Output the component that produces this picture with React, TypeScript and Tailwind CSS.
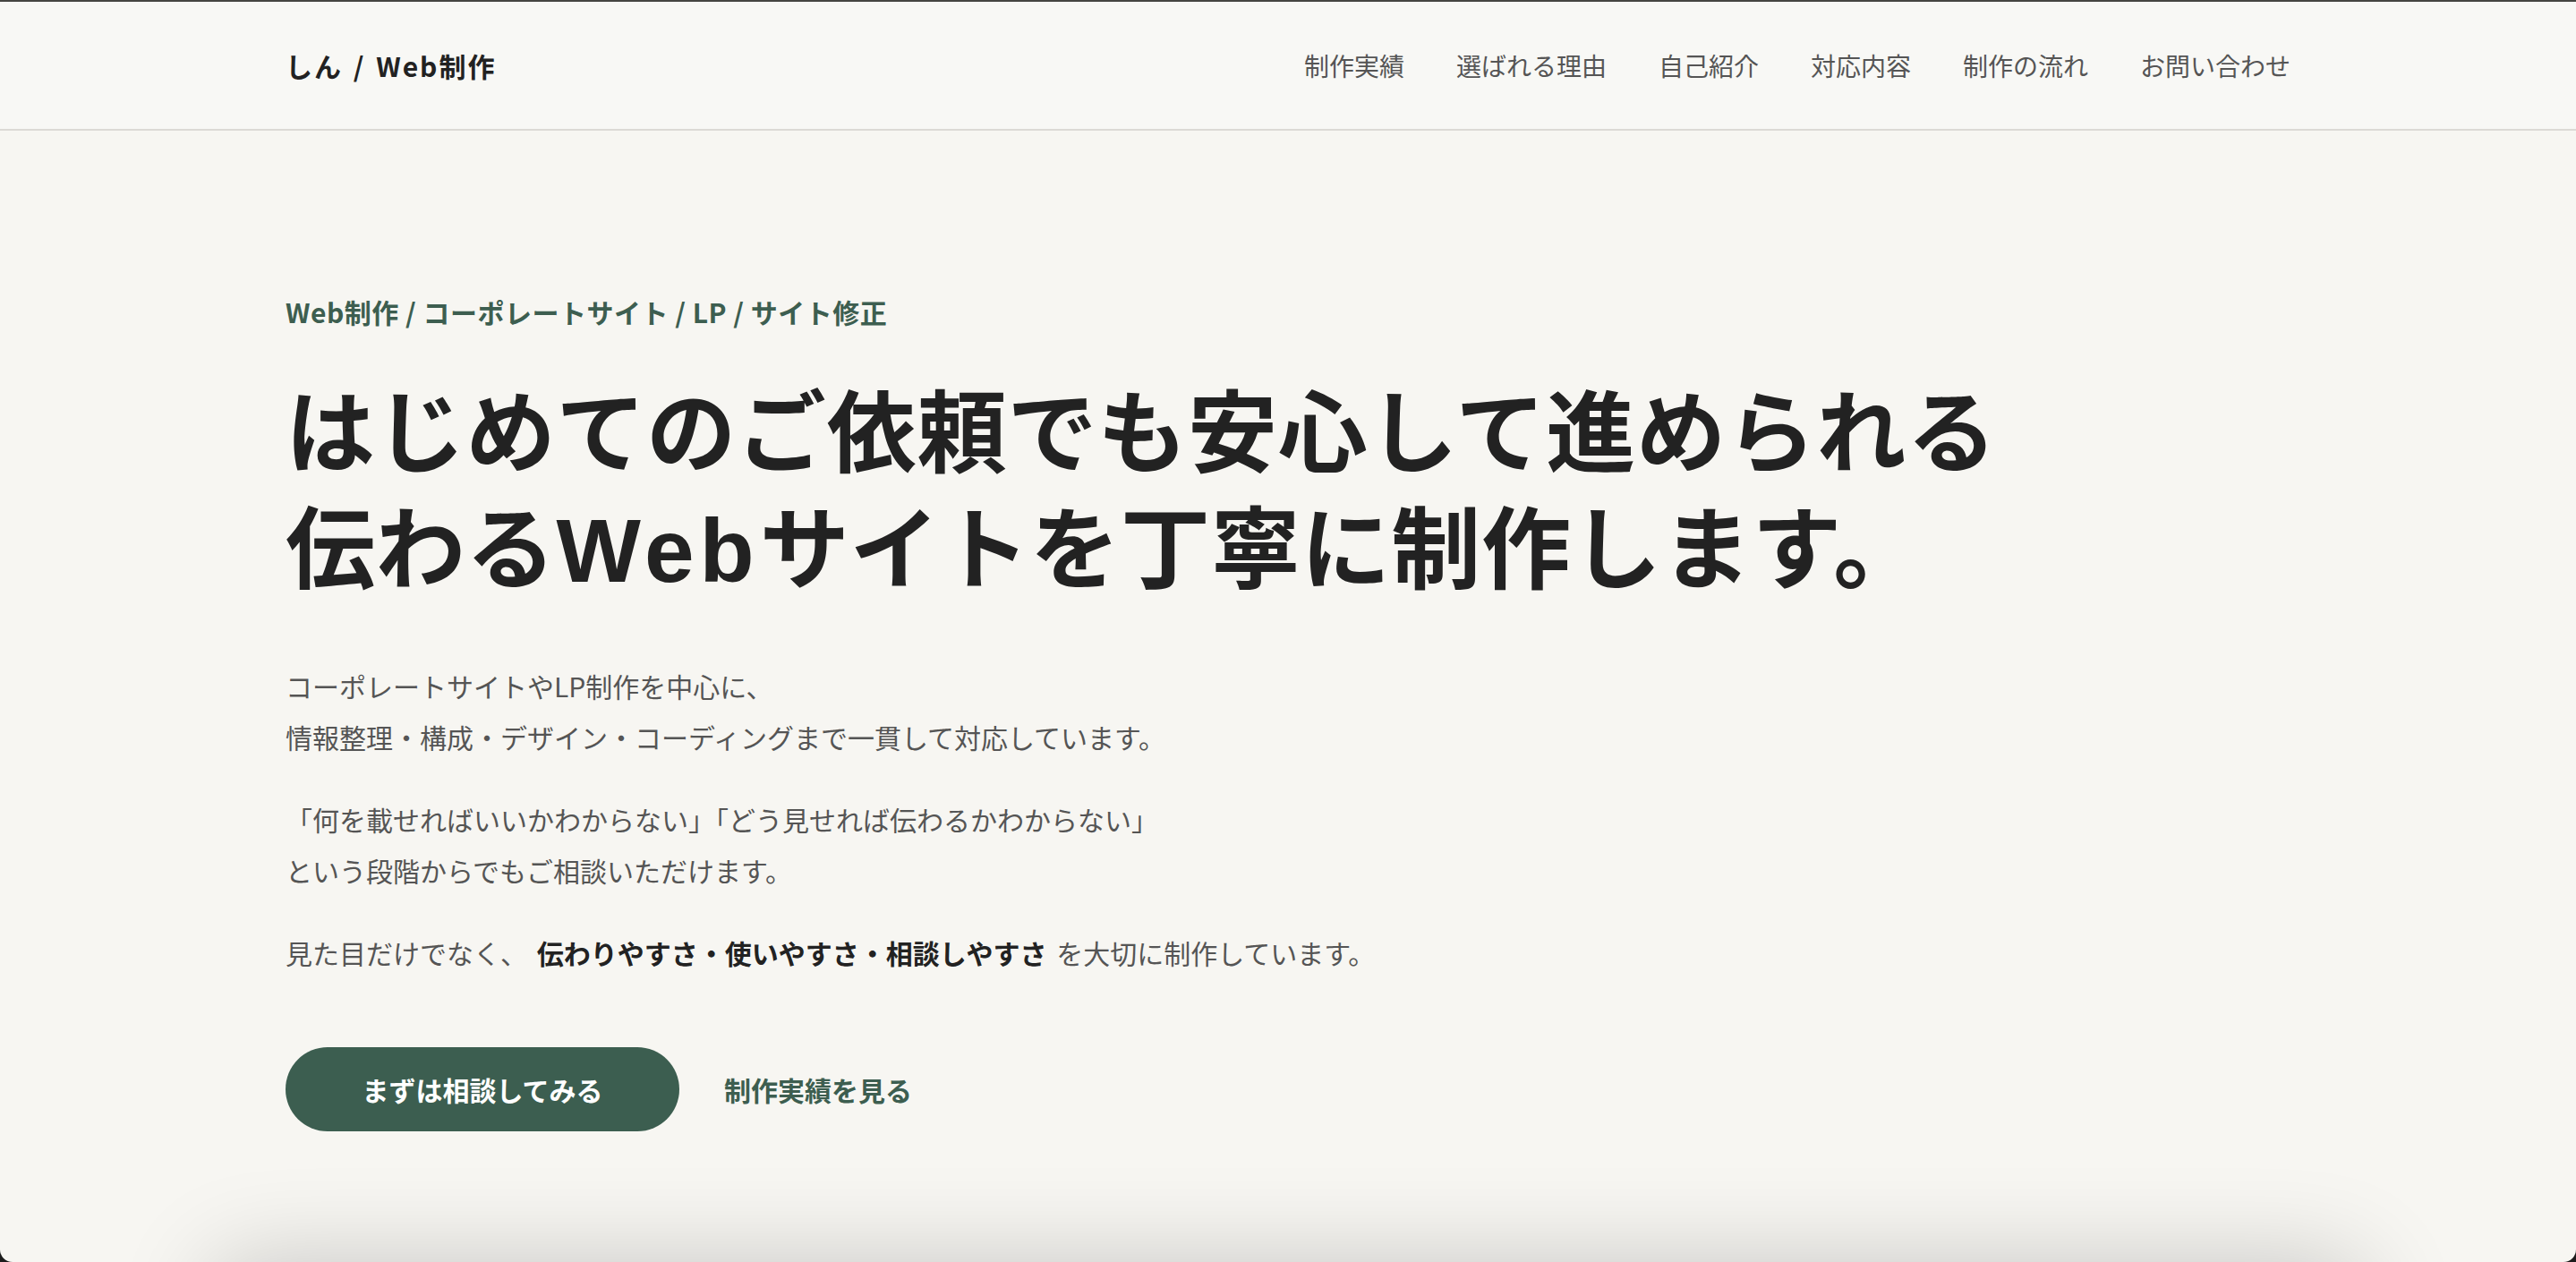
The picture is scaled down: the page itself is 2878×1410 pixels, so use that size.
import React from 'react';

const navItems = ['制作実績', '選ばれる理由', '自己紹介', '対応内容', '制作の流れ', 'お問い合わせ'];

export default function App() {
  return (
    <div className="h-screen w-full bg-[#1c1c1c] font-['Noto_Sans_CJK_JP','Noto_Sans',sans-serif]">
      <div className="h-full w-full overflow-hidden rounded-b-[14px] border-t-2 border-[#454541] bg-[#f7f6f2]">
        {/* Header */}
        <header className="border-b-2 border-[#dcdad5] bg-[#f8f8f5]">
          <div className="mx-auto flex h-[142px] max-w-[2400px] items-center justify-between px-[80px]">
            <a className="text-[30px] font-bold leading-none tracking-[2px] text-[#222] [word-spacing:3px]">しん / Web制作</a>
            <nav className="flex items-center gap-[58px]">
              {navItems.map((item) => (
                <a key={item} className="text-[28px] leading-none text-[#555]">
                  {item}
                </a>
              ))}
            </nav>
          </div>
        </header>

        {/* Hero */}
        <section className="mx-auto max-w-[2400px] px-[80px] pb-[147px] pt-[178px]">
          <p className="text-[30px] font-bold leading-[48px] tracking-[0.5px] text-[#3d5e50]">
            Web制作 / コーポレートサイト / LP / サイト修正
          </p>
          <h1 className="mt-[40px] text-[100px] font-bold leading-[130px] tracking-[0.8px] text-[#222]">
            はじめてのご依頼でも安心して進められる
            <br />
            伝わる<span className="font-['Liberation_Sans',sans-serif] leading-none tracking-[6px]">Web</span>サイトを丁寧に制作します。
          </h1>

          <div className="mt-[66px] text-[30px] leading-[57px] text-[#555]">
            <p>
              コーポレートサイトやLP制作を中心に、
              <br />
              情報整理・構成・デザイン・コーディングまで一貫して対応しています。
            </p>
            <p className="mt-[35px]">
              「何を載せればいいかわからない」「どう見せれば伝わるかわからない」
              <br />
              という段階からでもご相談いただけます。
            </p>
            <p className="mt-[35px]">
              見た目だけでなく、 <strong className="mx-[4px] font-bold text-[#222]">伝わりやすさ・使いやすさ・相談しやすさ</strong> を大切に制作しています。
            </p>
          </div>

          <div className="mt-[77px] flex items-center gap-[50px]">
            <a className="flex h-[94px] w-[440px] items-center justify-center rounded-full bg-[#3c5e50] text-[30px] font-bold text-white">
              まずは相談してみる
            </a>
            <a className="text-[30px] font-bold text-[#3d5e50]">制作実績を見る</a>
          </div>
        </section>

        {/* Next section card (just below the fold) */}
        <section className="mx-auto max-w-[2400px]">
          <div className="h-[600px] rounded-[24px] bg-[#f7f6f2] shadow-[0_0_110px_rgba(0,0,0,0.2)]" />
        </section>
      </div>
    </div>
  );
}
